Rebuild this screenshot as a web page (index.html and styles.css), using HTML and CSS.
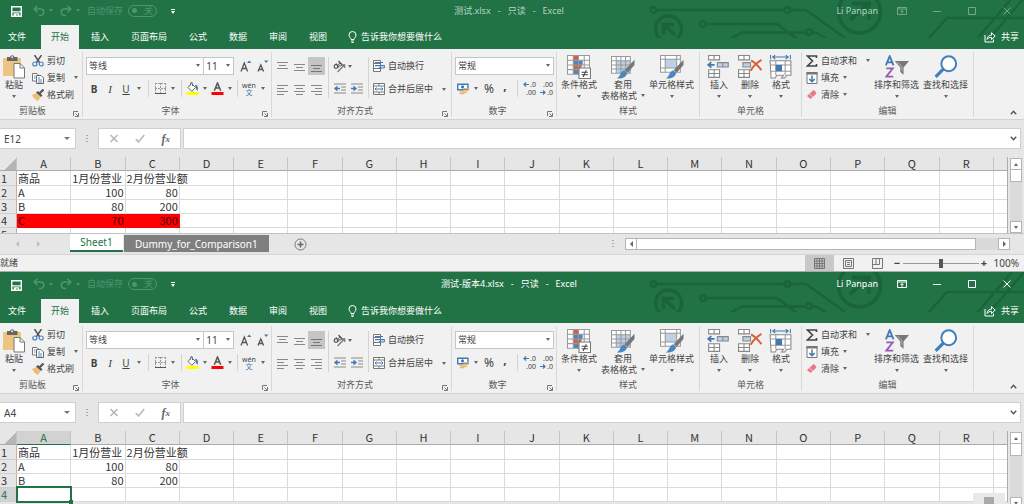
FILE: index.html
```html
<!DOCTYPE html>
<html lang="zh-CN">
<head>
<meta charset="utf-8">
<title>Excel</title>
<link rel="stylesheet" href="styles.css">
</head>
<body>
<svg class="defs" aria-hidden="true">
  <symbol id="save" viewBox="0 0 12 12"><path d="M.8.8h10.4v10.4H.8z" fill="none" stroke="currentColor" stroke-width="1.5"/><path d="M1 5.6h10v1.6H1zM3 8h6v3.5H7.4V9.4H5.600v2.100H3z" fill="currentColor"/></symbol>
  <symbol id="undo" viewBox="0 0 12 12"><path d="M1.200 4h6.300a3.200 3.200 0 0 1 0 6.500H6M4.500.8L1.200 4l3.300 3.200" fill="none" stroke="currentColor" stroke-width="1.600"/></symbol>
  <symbol id="redo" viewBox="0 0 12 12"><path d="M10.800 4H4.500a3.200 3.200 0 0 0 0 6.500H6M7.500.8L10.800 4 7.500 7.200" fill="none" stroke="currentColor" stroke-width="1.600"/></symbol>
  <symbol id="bulb" viewBox="0 0 9 12"><path d="M3 8.500C3 7 1 6.200 1 4a3.300 3.300 0 0 1 7 0C8 6.200 6 7 6 8.500zM3 10h3M3.500 11.500h2" fill="none" stroke="currentColor"/></symbol>
  <symbol id="share" viewBox="0 0 12 11"><path d="M1 3.500v7h8.500V8M3 8c.3-3 2-4.300 4.500-4.300V1.200L11.200 4.600 7.500 8V5.800C5.500 5.800 4 6.500 3 8z" fill="none" stroke="currentColor"/></symbol>
  <symbol id="ribbon-options" viewBox="0 0 10 8"><path d="M.5.5h9v7h-9zM.5 2h9M5 6.800V3.600M3.500 5L5 3.500 6.500 5" fill="none" stroke="currentColor"/></symbol>
  <symbol id="min" viewBox="0 0 8 8"><path d="M0 4.500h8" stroke="currentColor"/></symbol>
  <symbol id="max" viewBox="0 0 8 8"><path d="M.5.5h7v7h-7z" fill="none" stroke="currentColor"/></symbol>
  <symbol id="close" viewBox="0 0 8 8"><path d="M.5.5l7 7M7.500.5l-7 7" stroke="currentColor"/></symbol>
  <symbol id="paste" viewBox="0 0 22 24"><path d="M0 3h18v18H0z" fill="#edc581"/><path d="M4 2h3a2.300 2.300 0 0 1 4.500 0h3v4H4z" fill="#666"/><circle cx="9.200" cy="2.200" r="1" fill="#f1f1f1"/><path d="M11 8.500h6l4.500 4.500v10H11z" fill="#fff" stroke="#777"/><path d="M17 8.500V13h4.500" fill="none" stroke="#777"/></symbol>
  <symbol id="cut" viewBox="0 0 12 12"><path d="M2.500 0l5.300 8M9.500 0L4.200 8" stroke="#555" stroke-width="1.500"/><circle cx="2.800" cy="9" r="2" fill="none" stroke="#4a86bf" stroke-width="1.200"/><circle cx="9.200" cy="9" r="2" fill="none" stroke="#4a86bf" stroke-width="1.200"/></symbol>
  <symbol id="copy" viewBox="0 0 12 12"><path d="M.5 1.500h4.500l2 2V9H.500z" fill="#fff" stroke="#777"/><path d="M4.500 3.500h4.500l2.500 2.500v5.500h-7z" fill="#fff" stroke="#666"/><path d="M2 4h1.500M2 6h1.500M6 6h2M6 8h4M6 10h4" stroke="#4a86bf"/></symbol>
  <symbol id="brush" viewBox="0 0 12 12"><path d="M0 6l4.500-2 4 4L6 12C3.500 11 1.500 9 0 6z" fill="#edbd76"/><path d="M4 3.500l2-1.500 4.500 4.500L9 8z" fill="#555"/><path d="M7.500 4.500L11.500.5" stroke="#555" stroke-width="2.200"/></symbol>
  <symbol id="grow" viewBox="0 0 12 12"><path d="M1 11.500L4.300 3l3.300 8.500M2.200 8.500h4.200" fill="none" stroke="#555" stroke-width="1.300"/><path d="M7 3L9.200.5 11.400 3z" fill="#3f78b5"/></symbol>
  <symbol id="shrink" viewBox="0 0 12 12"><path d="M1 11.500L3.800 5l2.800 6.500M2 9.500h3.500" fill="none" stroke="#555" stroke-width="1.300"/><path d="M7 .5h4.400L9.200 3z" fill="#3f78b5"/></symbol>
  <symbol id="borders" viewBox="0 0 11 11"><path d="M.5 0v10M5.500 0v10M10.500 0v10M0 .5h11M0 5.500h11" stroke="#999" stroke-dasharray="2 1" fill="none"/><path d="M0 10.500h11" stroke="#555"/></symbol>
  <symbol id="fill" viewBox="0 0 12 13"><path d="M5 1.500l4 4-3.700 3.800-3.800-3.800zM4 3.500V1.500a1 1 0 0 1 2 0V4" fill="#fff" stroke="#666"/><path d="M8.500 2.800c3 .2 3.500 3 2.500 6-1.500-.5-1.500-3.200-2.500-6z" fill="#3d78b6"/><path d="M0 10h12v3H0z" fill="#ff0"/></symbol>
  <symbol id="font-color" viewBox="0 0 12 13"><path d="M2.800 8.800L6 1l3.200 7.800M4 6h4" fill="none" stroke="#555" stroke-width="1.500"/><path d="M0 10h12v3H0z" fill="red"/></symbol>
  <symbol id="top" viewBox="0 0 11 11"><path d="M0 1.500h11M2 4.500h7M0 7.500h11" stroke="#888"/></symbol>
  <symbol id="middle" viewBox="0 0 11 11"><path d="M0 3.500h11M2 6.500h7M0 9.500h11" stroke="#888"/></symbol>
  <symbol id="bottom" viewBox="0 0 11 11"><path d="M0 4.500h11M2 7.500h7M0 10.500h11" stroke="#777"/></symbol>
  <symbol id="left" viewBox="0 0 11 11"><path d="M0 1.500h11M0 4.500h7M0 7.500h11M0 10.500h7" stroke="#888"/></symbol>
  <symbol id="center" viewBox="0 0 11 11"><path d="M0 1.500h11M2 4.500h7M0 7.500h11M2 10.500h7" stroke="#888"/></symbol>
  <symbol id="right" viewBox="0 0 11 11"><path d="M0 1.500h11M4 4.500h7M0 7.500h11M4 10.500h7" stroke="#888"/></symbol>
  <symbol id="orient" viewBox="0 0 13 12"><circle cx="3" cy="6" r="1.800" fill="none" stroke="#555" stroke-width="1.200"/><path d="M3 3l3 4M5.500.5l4 4.500" stroke="#555" stroke-width="1.200"/><circle cx="7.200" cy="4" r="1.500" fill="none" stroke="#555"/><path d="M4.500 11.500L11.500 4.500M8.500 4.300h3.200v3.200" fill="none" stroke="#777" stroke-width="1.200"/></symbol>
  <symbol id="outdent" viewBox="0 0 12 11"><path d="M0 .5h12M7 3.500h5M7 6.500h5M0 9.500h12" stroke="#888"/><path d="M1 5h5" stroke="#3f78b5" stroke-width="1.500"/><path d="M0 5l3.500-3v6z" fill="#3f78b5"/></symbol>
  <symbol id="indent" viewBox="0 0 12 11"><path d="M0 .5h12M7 3.500h5M7 6.500h5M0 9.500h12" stroke="#888"/><path d="M0 5h5" stroke="#3f78b5" stroke-width="1.500"/><path d="M6 5L2.500 2v6z" fill="#3f78b5"/></symbol>
  <symbol id="wrap" viewBox="0 0 12 12"><path d="M.5.500h7v11h-7zM.5 3.500h7M.5 8.500h7" fill="#fff" stroke="#777"/><path d="M2 2.500h8M2 5.700h9c1.500 0 1 2.300-1 2.300H7" stroke="#3f78b5" fill="none" stroke-width="1.200"/><path d="M5.500 8L8 6v4z" fill="#3f78b5"/></symbol>
  <symbol id="merge" viewBox="0 0 12 12"><path d="M.5.5h11v11H.5zM.5 3h11M.5 9h11M6 .5V3M6 9v2.500" fill="#fff" stroke="#777"/><path d="M2 6h8M3.500 4.500L2 6l1.500 1.500M8.500 4.500L10 6 8.500 7.500" stroke="#3f78b5" fill="none"/></symbol>
  <symbol id="money" viewBox="0 0 13 12"><path d="M.8.8h11v6H.8z" fill="#fff" stroke="#3f78b5" stroke-width="1.500"/><circle cx="6" cy="3.700" r="1.700" fill="#3f78b5"/><path d="M7 5.500h5M7 7.500h5M6 9.500h5M3 9h3M3 11h5" stroke="#e9b568" stroke-width="1.400"/></symbol>
  <symbol id="arrow-l" viewBox="0 0 6 5"><path d="M6 2.500H1M3 .5l-2 2 2 2" fill="none" stroke="#3f78b5" stroke-width="1.200"/></symbol>
  <symbol id="arrow-r" viewBox="0 0 6 5"><path d="M0 2.500h5M3 .5l2 2-2 2" fill="none" stroke="#3f78b5" stroke-width="1.200"/></symbol>
  <symbol id="conditional" viewBox="0 0 23 23"><path d="M.5.5h21v18H.5z" fill="#fff"/><path d="M6 .5h5V5H6zM6 9.500h8V14H6z" fill="#d9603b"/><path d="M6 5h9v4.500H6zM6 14h6v4.500H6z" fill="#4a86bf"/><path d="M.5.5h21v18H.5zM6 .5v18M11 .5v18M16.500.5v18M.5 5h21M.5 9.500h21M.5 14h21" fill="none" stroke="#999"/><path d="M11.500 12.500h11v10h-11z" fill="#fff" stroke="#777"/><path d="M14 16.500h6M14 19h6M18.500 14.500l-3 6.500" stroke="#444"/></symbol>
  <symbol id="table-style" viewBox="0 0 23 23"><path d="M.5 1.500h18v16H.5z" fill="#fff"/><path d="M5 5.500h13.500v12H5z" fill="#bdd0e6"/><path d="M.5 1.500h18v16H.5zM5 1.500v16M9.500 1.500v16M14 1.500v16M.5 5.500h18M.5 9.500h18M.5 13.500h18" fill="none" stroke="#999"/><path d="M22.500 4.500v5L16 17l-3-2.500z" fill="#777"/><path d="M12.500 14.500l3 3c-1 4-5 5.500-10 5 3.500-1.500 3-6.500 7-8z" fill="#4a86bf"/></symbol>
  <symbol id="cell-style" viewBox="0 0 23 23"><path d="M.5.500h19v16H.5z" fill="#fff" stroke="#999"/><path d="M5 4h11v8.500H5z" fill="#bdd0e6"/><path d="M5 .5v16M16 .5v16M.5 4h19M.5 12.500h19" fill="none" stroke="#999"/><path d="M22.500 4.500v5L16 17l-3-2.500z" fill="#777"/><path d="M12.500 14.500l3 3c-1 4-5 5.500-10 5 3.500-1.500 3-6.500 7-8z" fill="#4a86bf"/></symbol>
  <symbol id="insert" viewBox="0 0 22 22"><path d="M1.500.5h10v4h-10zM6.500.5v4M1.500 13.500h10v7h-10zM6.500 13.500v7M1.500 17h10" fill="#fff" stroke="#888"/><path d="M9.500 7h10v4h-10zM14.500 7v4" fill="#bdd0e6" stroke="#888"/><path d="M1 9h6M4 6.500L1 9l3 2.500" fill="none" stroke="#3f78b5" stroke-width="1.500"/></symbol>
  <symbol id="delete" viewBox="0 0 22 22"><path d="M.5.5h10v4H.5zM5.500.5v4M.5 13.500h10v7H.5zM5.500 13.500v7M.5 17h10" fill="#fff" stroke="#888"/><path d="M4.500 7h7v4h-7z" fill="#bdd0e6" stroke="#888"/><path d="M12 5c3.500 2 6.500 5 9.500 9M21.500 4.500C17.500 7 14 10 11.500 14.500" fill="none" stroke="#d9603b" stroke-width="1.800"/></symbol>
  <symbol id="format" viewBox="0 0 22 23"><path d="M1 0v4M20 0v4M3 2h15M5.500.2L3 2l2.500 1.800M15.500.2L18 2l-2.500 1.800" fill="none" stroke="#3f78b5"/><path d="M.5 5.500h20v14h-4l-2 2.500h-3l2-2.500H7L5.500 22h-4z" fill="#fff" stroke="#888"/><path d="M6 5.500v14M15 5.500v14M.5 9.500h20M.5 15.500h20" stroke="#999"/><path d="M6 9.500h6v6H6z" fill="#3f78b5"/></symbol>
  <symbol id="sigma" viewBox="0 0 12 12"><path d="M10.500 3V1H1.500l5 5-5 5h9V9" fill="none" stroke="#444" stroke-width="1.600"/></symbol>
  <symbol id="fill-down" viewBox="0 0 12 12"><path d="M1 .5h10v11H1z" fill="#fff" stroke="#777"/><path d="M.5 0h11v2.500H.5z" fill="#777"/><path d="M6 3.500v6M3.300 7L6 9.700 8.700 7" fill="none" stroke="#3f78b5" stroke-width="1.500"/></symbol>
  <symbol id="eraser" viewBox="0 0 12 12"><path d="M1 7l6-5.500a1 1 0 0 1 1.500 0l1.500 2a1 1 0 0 1 0 1.500L4.500 10z" fill="#e8798b"/><path d="M3.500 4.800l3.200 3.500" stroke="#f7c8cf"/></symbol>
  <symbol id="sort" viewBox="0 0 22 22"><path d="M.8 9.500L4.300 1l3.500 8.500M2 6.800h4.600" fill="none" stroke="#3f78b5" stroke-width="1.600"/><path d="M1.200 12.200h6l-6 7.600h6.300" fill="none" stroke="#9b59b6" stroke-width="1.600"/><path d="M9 5.500h13l-5 6v6.500l-3-2.500v-4z" fill="#777"/><path d="M11.500 6.500l4 4.500v4" fill="none" stroke="#aaa"/></symbol>
  <symbol id="find" viewBox="0 0 22 22"><circle cx="13.500" cy="8" r="6.800" fill="#fff" stroke="#3f7fbd" stroke-width="1.800"/><path d="M8.500 13L1.500 20" stroke="#3f7fbd" stroke-width="3"/></symbol>
  <symbol id="launcher" viewBox="0 0 6 6"><path d="M.5 5V.5H5M2.500 2.500L5 5M5.500 2v3.500H2" fill="none" stroke="#777"/></symbol>
  <symbol id="collapse" viewBox="0 0 7 5"><path d="M.8 4.200l2.700-3 2.700 3" fill="none" stroke="#555" stroke-width="1.400"/></symbol>
  <symbol id="expand" viewBox="0 0 7 5"><path d="M.8.8l2.700 3 2.700-3" fill="none" stroke="#555" stroke-width="1.400"/></symbol>
  <symbol id="cancel" viewBox="0 0 10 9"><path d="M1.500 1l7 7M8.500 1l-7 7" stroke="#b5b5b5" stroke-width="1.500"/></symbol>
  <symbol id="check" viewBox="0 0 10 9"><path d="M.8 5l2.700 3L9.200 1" fill="none" stroke="#b5b5b5" stroke-width="1.500"/></symbol>
  <symbol id="plus" viewBox="0 0 13 13"><circle cx="6.500" cy="6.500" r="5.500" fill="none" stroke="#777"/><path d="M6.500 3.500v6M3.500 6.500h6" stroke="#666" stroke-width="1.500"/></symbol>
  <symbol id="normal-view" viewBox="0 0 11 11"><path d="M.5.500h10v10H.5zM3 .5v10M5.500.5v10M8 .5v10M.5 3h10M.5 5.500h10M.5 8h10" fill="none" stroke="#777"/></symbol>
  <symbol id="layout-view" viewBox="0 0 11 11"><path d="M.5.500h10v10H.5zM2.500 2.500h6v6h-6zM4 4.500h3M4 6.500h3" fill="none" stroke="#777"/></symbol>
  <symbol id="break-view" viewBox="0 0 11 11"><path d="M.5.500h10v10H.5zM.5 6.500h7v-6M4 .5v6" fill="none" stroke="#777"/></symbol>
  <symbol id="circuit" viewBox="640 -3 384 41">
    <g fill="none" stroke="#1b6339" stroke-width="2.400">
      <circle cx="653.500" cy="10" r="2.800"/><path d="M656.500 10h128M790.500 10H806l39 28"/><circle cx="787.500" cy="10" r="2.800"/>
      <circle cx="703" cy="24" r="2.800"/><path d="M706 24h71l20 15M730 39l12-6.500h64M812 32.500h4l10 6"/><circle cx="809" cy="32" r="2.800"/>
      <path d="M928 39l19-21h77M977 39l35-41M989 39l35-41"/>
      <circle cx="668.500" cy="29" r="13" stroke-width="3.400"/><path d="M675 35l-11-10M663.500 35V24.500H674" stroke-width="3.600"/>
      <circle cx="859.500" cy="12" r="21" stroke-width="3.600"/><path d="M850 20l18-16M852 3.500h17V20" stroke-width="4"/>
    </g>
  </symbol>
</svg>

<main id="desktop" class="desktop"></main>

<template id="workbook">
  <section class="window">
    <header class="header">
      <svg class="circuit" aria-hidden="true"><use href="#circuit"/></svg>
      <div class="titlebar">
        <div class="quick">
          <button class="save" aria-label="保存"><svg class="i11"><use href="#save"/></svg></button>
          <button class="faded history" aria-label="撤消"><svg class="i12"><use href="#undo"/></svg><i class="caret"></i></button>
          <button class="faded history" aria-label="恢复"><svg class="i12"><use href="#redo"/></svg><i class="caret"></i></button>
          <span class="faded">自动保存</span>
          <button class="faded toggle" role="switch" aria-checked="false" aria-label="自动保存"><i class="knob"></i>关</button>
          <button class="customize" aria-label="自定义快速访问工具栏"><i class="caret"></i></button>
        </div>
        <h1 class="title"></h1>
        <div class="account">
          <span class="user">Li Panpan</span>
          <button aria-label="功能区显示选项"><svg class="options-icon"><use href="#ribbon-options"/></svg></button>
          <button aria-label="最小化"><svg class="i8"><use href="#min"/></svg></button>
          <button aria-label="最大化"><svg class="i8"><use href="#max"/></svg></button>
          <button aria-label="关闭"><svg class="i8"><use href="#close"/></svg></button>
        </div>
      </div>
      <nav class="tabs">
        <button class="tab file">文件</button>
        <button class="tab active">开始</button>
        <button class="tab">插入</button>
        <button class="tab">页面布局</button>
        <button class="tab">公式</button>
        <button class="tab">数据</button>
        <button class="tab">审阅</button>
        <button class="tab">视图</button>
        <button class="tell"><svg class="bulb"><use href="#bulb"/></svg>告诉我你想要做什么</button>
        <button class="share"><svg class="i12"><use href="#share"/></svg>共享</button>
      </nav>
    </header>

    <div class="ribbon">
      <section class="group clipboard">
        <div class="tools">
          <button class="big paste"><svg class="i24"><use href="#paste"/></svg><span>粘贴</span><i class="caret"></i></button>
          <div class="stack">
            <button class="small"><svg class="i12"><use href="#cut"/></svg>剪切</button>
            <button class="small"><svg class="i12"><use href="#copy"/></svg>复制<i class="caret far"></i></button>
            <button class="small"><svg class="i12"><use href="#brush"/></svg>格式刷</button>
          </div>
        </div>
        <footer>剪贴板</footer><button class="launch" aria-label="剪贴板设置"><svg class="i6"><use href="#launcher"/></svg></button>
      </section>

      <section class="group font">
        <div class="tools rows">
          <div class="row">
            <label class="combo font-name"><select aria-label="字体"><option>等线</option></select></label>
            <label class="combo font-size"><select aria-label="字号"><option>11</option></select></label>
            <button class="tool sized" aria-label="增大字号"><svg class="i12"><use href="#grow"/></svg></button>
            <button class="tool sized" aria-label="减小字号"><svg class="i12"><use href="#shrink"/></svg></button>
          </div>
          <div class="row">
            <button class="tool letter"><b>B</b></button>
            <button class="tool letter serif"><em>I</em></button>
            <button class="tool letter split"><u>U</u><i class="caret"></i></button>
            <hr>
            <button class="tool split" aria-label="边框"><svg class="i11"><use href="#borders"/></svg><i class="caret"></i></button>
            <hr>
            <button class="tool split tight" aria-label="填充颜色"><svg class="i13"><use href="#fill"/></svg><i class="caret"></i></button>
            <button class="tool split tight" aria-label="字体颜色"><svg class="i13"><use href="#font-color"/></svg><i class="caret"></i></button>
            <hr>
            <button class="tool split"><span class="pinyin"><span>wén</span><span>文</span></span><i class="caret"></i></button>
          </div>
        </div>
        <footer>字体</footer><button class="launch" aria-label="字体设置"><svg class="i6"><use href="#launcher"/></svg></button>
      </section>

      <section class="group align">
        <div class="tools align-tools">
          <div class="cluster">
            <button class="tool" aria-label="顶端对齐"><svg class="i11"><use href="#top"/></svg></button>
            <button class="tool" aria-label="垂直居中"><svg class="i11"><use href="#middle"/></svg></button>
            <button class="tool pressed" aria-label="底端对齐"><svg class="i11"><use href="#bottom"/></svg></button>
            <button class="tool" aria-label="左对齐"><svg class="i11"><use href="#left"/></svg></button>
            <button class="tool" aria-label="居中"><svg class="i11"><use href="#center"/></svg></button>
            <button class="tool" aria-label="右对齐"><svg class="i11"><use href="#right"/></svg></button>
          </div>
          <div class="cluster two">
            <button class="tool" aria-label="方向"><svg class="i13"><use href="#orient"/></svg></button>
            <i class="caret"></i>
            <button class="tool" aria-label="减少缩进量"><svg class="i12"><use href="#outdent"/></svg></button>
            <button class="tool" aria-label="增加缩进量"><svg class="i12"><use href="#indent"/></svg></button>
          </div>
          <div class="cluster one">
            <button class="small"><svg class="i12"><use href="#wrap"/></svg>自动换行</button>
            <button class="small"><svg class="i12"><use href="#merge"/></svg>合并后居中<i class="caret far"></i></button>
          </div>
        </div>
        <footer>对齐方式</footer><button class="launch" aria-label="对齐设置"><svg class="i6"><use href="#launcher"/></svg></button>
      </section>

      <section class="group number">
        <div class="tools rows">
          <div class="row"><label class="combo wide"><select aria-label="数字格式"><option>常规</option></select></label></div>
          <div class="row">
            <button class="tool split" aria-label="会计数字格式"><svg class="i12"><use href="#money"/></svg><i class="caret"></i></button>
            <button class="tool sign">%</button>
            <button class="tool sign comma">,</button>
            <hr>
            <button class="tool decimals"><span><svg class="arrow"><use href="#arrow-l"/></svg>.0</span><span>.00</span></button>
            <button class="tool decimals"><span>.00</span><span><svg class="arrow"><use href="#arrow-r"/></svg>.0</span></button>
          </div>
        </div>
        <footer>数字</footer><button class="launch" aria-label="数字设置"><svg class="i6"><use href="#launcher"/></svg></button>
      </section>

      <section class="group styles">
        <div class="tools">
          <button class="big"><svg class="i24"><use href="#conditional"/></svg><span>条件格式</span><i class="caret"></i></button>
          <button class="big"><svg class="i24"><use href="#table-style"/></svg><span>套用</span><span>表格格式<i class="caret inline"></i></span></button>
          <button class="big"><svg class="i24"><use href="#cell-style"/></svg><span>单元格样式</span><i class="caret"></i></button>
        </div>
        <footer>样式</footer>
      </section>

      <section class="group cells">
        <div class="tools">
          <button class="big"><svg class="i24"><use href="#insert"/></svg><span>插入</span><i class="caret"></i></button>
          <button class="big"><svg class="i24"><use href="#delete"/></svg><span>删除</span><i class="caret"></i></button>
          <button class="big"><svg class="i24"><use href="#format"/></svg><span>格式</span><i class="caret"></i></button>
        </div>
        <footer>单元格</footer>
      </section>

      <section class="group editing">
        <div class="tools">
          <div class="stack">
            <button class="small"><svg class="i12"><use href="#sigma"/></svg>自动求和<i class="caret far"></i></button>
            <button class="small"><svg class="i12"><use href="#fill-down"/></svg>填充<i class="caret"></i></button>
            <button class="small"><svg class="i12"><use href="#eraser"/></svg>清除<i class="caret"></i></button>
          </div>
          <button class="big"><svg class="i24"><use href="#sort"/></svg><span>排序和筛选</span><i class="caret"></i></button>
          <button class="big"><svg class="i24"><use href="#find"/></svg><span>查找和选择</span><i class="caret"></i></button>
        </div>
        <footer>编辑</footer>
      </section>
      <button class="collapse" aria-label="折叠功能区"><svg class="chevron"><use href="#collapse"/></svg></button>
    </div>

    <div class="formula-bar">
      <label class="name-box"><input class="cell-name" aria-label="名称框"><i class="caret"></i></label>
      <span class="dots"></span>
      <div class="formula-actions">
        <button aria-label="取消"><svg class="i9"><use href="#cancel"/></svg></button>
        <button aria-label="输入"><svg class="i9"><use href="#check"/></svg></button>
        <button class="fx">f<small>x</small></button>
      </div>
      <label class="formula"><input aria-label="编辑栏"><svg class="chevron"><use href="#expand"/></svg></label>
    </div>

    <div class="sheet-area">
      <table class="sheet"></table>
      <div class="vscroll">
        <button aria-label="向上滚动"><i class="caret up"></i></button>
        <div class="thumb"></div>
        <div class="track"></div>
        <button aria-label="向下滚动"><i class="caret"></i></button>
      </div>
    </div>
  </section>
</template>

<template id="window-footer">
  <div class="sheet-tabs">
    <button class="step" aria-label="上一张"><i class="caret prev"></i></button>
    <button class="step" aria-label="下一张"><i class="caret next"></i></button>
    <button class="sheet-tab current">Sheet1</button>
    <button class="sheet-tab dummy">Dummy_for_Comparison1</button>
    <button class="add" aria-label="新工作表"><svg class="i13"><use href="#plus"/></svg></button>
    <span class="dots"></span>
    <div class="hscroll">
      <button aria-label="向左滚动"><i class="caret prev"></i></button>
      <div class="thumb"></div>
      <div class="track"></div>
      <button aria-label="向右滚动"><i class="caret next"></i></button>
    </div>
  </div>
  <footer class="status">
    <span class="ready">就绪</span>
    <button class="view on" aria-label="普通"><svg class="i11"><use href="#normal-view"/></svg></button>
    <button class="view" aria-label="页面布局"><svg class="i11"><use href="#layout-view"/></svg></button>
    <button class="view" aria-label="分页预览"><svg class="i11"><use href="#break-view"/></svg></button>
    <button class="zoom-step" aria-label="缩小">−</button>
    <input class="zoom" type="range" min="0" max="100" value="50" aria-label="缩放">
    <button class="zoom-step" aria-label="放大">+</button>
    <span class="percent">100%</span>
  </footer>
</template>
<script src="app.js"></script>
</body>
</html>
```
FILE: styles.css
```css
* { box-sizing: border-box; }
body {
  margin: 0;
  background: #e6e6e6;
  color: #444;
  font: 9px/12px "Noto Sans", "Noto Sans CJK SC", sans-serif;
}
button, input, select { font: inherit; color: inherit; border: 0; padding: 0; margin: 0; background: none; outline: 0; border-radius: 0; }
button { display: flex; align-items: center; justify-content: center; white-space: nowrap; flex: none; }
svg { display: block; flex: none; }
.defs { position: absolute; width: 0; height: 0; }
.desktop { position: relative; display: flex; flex-direction: column; height: 100vh; overflow: hidden; }
.window { flex: none; }
.compare { flex: 1; min-height: 0; display: flex; flex-direction: column; }

.i6 { width: 6px; height: 6px; }
.i8 { width: 8px; height: 8px; }
.i9 { width: 10px; height: 9px; }
.i11 { width: 11px; height: 11px; }
.i12 { width: 12px; height: 12px; }
.i13 { width: 13px; height: 13px; }
.i24 { width: 24px; height: 24px; }
.chevron { width: 7px; height: 5px; }
.caret { display: block; flex: none; width: 0; height: 0; border: 2px solid transparent; border-top: 3px solid currentColor; border-bottom: 0; }
.caret.up { border-top: 0; border-bottom: 3px solid currentColor; }
.caret.prev { border: 3px solid transparent; border-left: 0; border-right: 3px solid currentColor; }
.caret.next { border: 3px solid transparent; border-right: 0; border-left: 3px solid currentColor; }

/* Title bar and ribbon tabs */
.header { position: relative; overflow: hidden; flex: none; background: #217346; color: #fff; }
.circuit { position: absolute; right: 0; bottom: 11px; width: 384px; height: 41px; }
.titlebar { position: relative; display: grid; grid-template-columns: 1fr auto 1fr; align-items: center; height: 25px; padding: 0 6px 4px 0; }
.compare .titlebar { height: 27px; padding-bottom: 3px; }
.title { margin: 0; font: inherit; white-space: pre; }
.quick { display: flex; align-items: center; padding-left: 11px; }
.faded { color: #4f9370; }
.save { margin-right: 11px; padding-top: 2px; }
.history { gap: 4px; width: 27px; justify-content: flex-start; }
.toggle { width: 29px; height: 12px; margin-left: 5px; padding: 0 3px; border: 1px solid #4f9370; border-radius: 6px; justify-content: space-between; }
.knob { width: 5px; height: 5px; border-radius: 3px; background: #4f9370; }
.customize { margin-left: 14px; padding-top: 3px; }
.customize .caret { position: relative; }
.customize .caret::before { content: ""; position: absolute; left: -2px; top: -5px; width: 4px; height: 1px; background: #fff; }
.account { display: flex; align-items: center; justify-content: flex-end; gap: 13px; }
.account button { width: 22px; height: 16px; }
.options-icon { width: 10px; height: 8px; }
.inactive .title, .inactive .user { color: #b5d2c1; }
.inactive .account button { color: #72a78a; }
.tabs { position: relative; display: flex; gap: 2px; height: 24px; }
.tab { height: 24px; padding: 0 10px; }
.tab.file { width: 39px; padding: 0 0 0 8px; justify-content: flex-start; }
.tab.active { background: #f1f1f1; color: #217346; }
.tell { margin-left: 9px; gap: 4px; }
.bulb { width: 9px; height: 12px; }
.share { margin-left: auto; padding-right: 5px; gap: 5px; }

/* Ribbon */
.ribbon { display: flex; flex: none; height: 71px; padding: 3px 0 2px; background: #f1f1f1; border-bottom: 1px solid #d2d2d2; }
.ribbon .caret { color: #666; }
.group { position: relative; display: flex; flex-direction: column; flex: none; border-right: 1px solid #d8d8d8; }
.group footer { text-align: center; line-height: 13px; color: #5a5a5a; }
.launch { position: absolute; right: 3px; bottom: 0; }
.tools { display: flex; flex: 1; }
.clipboard { width: 83px; }
.clipboard footer { padding-right: 17px; }
.font { width: 189px; }
.align { width: 180px; }
.number { width: 105px; }
.font footer, .align footer, .number footer { padding-right: 13px; }
.styles { width: 143px; }
.cells { width: 102px; }
.editing { width: 172px; }
.big { flex-direction: column; justify-content: flex-start; padding-top: 3px; }
.big span { line-height: 11px; }
.big .caret { margin-top: 5px; }
.big .caret.inline { display: inline-block; margin: 0 0 2px 4px; }
.paste { width: 28px; }
.stack { display: flex; flex-direction: column; padding-left: 4px; }
.small { height: 17px; gap: 3px; justify-content: flex-start; }
.small .caret { margin-left: 1px; }
.small .caret.far { margin-left: 6px; }

.rows { flex-direction: column; padding-top: 2px; }
.row { display: flex; align-items: center; height: 23px; padding-left: 3px; }
.combo { position: relative; display: flex; }
.combo::after { content: ""; position: absolute; right: 4px; top: 7px; border: 2px solid transparent; border-top: 3px solid #666; border-bottom: 0; pointer-events: none; }
.combo select { appearance: none; width: 100%; height: 18px; border: 1px solid #c6c6c6; background: #fff; padding: 0 2px; }
.font-name { width: 119px; }
.font-size { width: 31px; margin-left: -1px; }
.font-size select { font-size: 10px; }
.combo.wide { width: 99px; }
.tool { height: 18px; }
.sized { width: 17px; margin-left: 3px; }
.sized + .sized { margin-left: 0; }
.letter { width: 16px; font-size: 10px; }
.serif { font: 11px/12px "Liberation Serif", serif; }
.split { gap: 5px; width: 27px; }
.tight { gap: 4px; width: 25px; }
.font .letter.split { width: 27px; gap: 7px; }
.row hr { width: 1px; height: 17px; border: 0; margin: 0 2px 0 3px; background: #d4d4d4; }
.pinyin { display: flex; flex-direction: column; font-size: 7px; line-height: 7px; }
.pinyin span:last-child { color: #3f78b5; text-align: center; }
.align-tools { display: flex; padding-top: 5px; }
.cluster { display: grid; grid-template-columns: repeat(3, 17px); grid-auto-rows: 18px; row-gap: 5px; padding: 0 3px 0 2px; height: 41px; border-right: 1px solid #d4d4d4; align-items: center; }
.cluster.two { grid-template-columns: 17px 17px; padding: 0 3px 0 2px; }
.cluster.one { grid-template-columns: 1fr; border: 0; padding: 0 0 0 4px; }
.pressed { background: #c5c5c5; }
.sign { width: 18px; font-size: 12px; }
.comma { width: 14px; font-weight: bold; padding-bottom: 6px; }
.decimals { width: 17px; flex-direction: column; align-items: flex-end; font-size: 7px; line-height: 8px; padding-right: 3px; }
.decimals span { display: flex; align-items: center; gap: 1px; }
.arrow { width: 6px; height: 5px; }
.number .split { width: 25px; }
.number .row hr { margin: 0 4px 0 5px; }
.styles .tools { gap: 4px; padding-left: 4px; }
.cells .tools { justify-content: space-between; padding: 0 8px 0 7px; }
.editing .stack { width: 68px; padding-left: 4px; }
.editing .tools { gap: 4px; }
.collapse { margin-left: auto; align-self: flex-end; padding: 0 7px 2px 0; }

/* Formula bar */
.formula-bar { display: flex; flex: none; align-items: center; height: 37px; padding: 0 3px 0 0; background: #e6e6e6; }
.name-box, .formula, .formula-actions { display: flex; align-items: center; height: 21px; background: #fff; border: 1px solid #cfcfcf; }
.name-box { width: 76px; border-left: 0; padding-right: 5px; }
.name-box input { width: 60px; flex: 1; padding-left: 4px; font-size: 10px; }
.name-box .caret { color: #777; border-width: 3px 3px 0; }
.dots { width: 2px; height: 8px; background: repeating-linear-gradient(#aaa 0 1px, transparent 1px 3px); }
.formula-bar .dots { margin: 0 10px; }
.formula-actions { width: 83px; justify-content: space-around; padding: 0 2px; }
.fx { font: italic bold 12px/12px "Liberation Serif", serif; color: #666; }
.fx small { font-size: 9px; }
.formula { flex: 1; margin-left: 2px; padding-right: 3px; }
.formula input { flex: 1; min-width: 0; }

/* Cells */
.sheet-area { display: flex; overflow: hidden; height: 77px; border-bottom: 1px solid #c3c3c3; background: #e6e6e6; }
.compare .sheet-area { flex: 1; height: auto; border: 0; }
.sheet { flex: 1; width: 0; table-layout: fixed; border-collapse: separate; border-spacing: 0; font: 11px/13px "Noto Sans CJK SC", sans-serif; color: #333; background: #fff; align-self: flex-start; border-right: 1px solid #ababab; }
.sheet th, .sheet td { height: 14px; padding: 0 1px; border: solid #dadada; border-width: 0 1px 1px 0; white-space: nowrap; line-height: 13px; }
.sheet tbody tr:first-child > * { height: 15px; padding-top: 1px; }
.sheet th { background: #e6e6e6; font-weight: normal; border-color: #b5b5b5; text-align: center; }
.sheet tbody th { text-align: left; border-bottom-color: #cfcfcf; }
.sheet thead th { border-bottom-color: #ababab; border-right-color: #c4c4c4; }
.sheet thead th:last-child, .sheet tbody td:last-child { border-right: 0; }
.sheet .corner { width: 17px; background: linear-gradient(135deg, #e6e6e6 62%, #b5b5b5 62%); }
.sheet .edge { width: 13px; }
.sheet .num { text-align: right; }
.sheet .marked { background: red; border-color: red; color: #400; }
.sheet thead .picked, .sheet tbody .picked { background: #d2d2d2; color: #217346; }
.sheet thead .picked { border-bottom-color: #217346; }
.sheet .cursor { position: relative; }
.sheet .cursor::before { content: ""; position: absolute; inset: -2px -2px -2px -1px; border: 2px solid #217346; }
.sheet .cursor::after { content: ""; position: absolute; right: -3px; bottom: -3px; width: 4px; height: 4px; background: #217346; }

.vscroll { display: flex; flex-direction: column; width: 12px; margin: 1px 2px 0 2px; background: #dadada; }
.compare .vscroll { flex: none; height: 77px; }
.vscroll button, .hscroll button { width: 12px; height: 12px; background: #fff; border: 1px solid #b5b5b5; color: #666; }
.vscroll .thumb { height: 13px; background: #fff; border: 1px solid #b5b5b5; margin-top: -1px; }
.vscroll .track { flex: 1; }

/* Sheet tabs and status bar */
.sheet-tabs { display: flex; align-items: center; height: 21px; background: #e6e6e6; border-bottom: 1px solid #d5d5d5; padding-right: 14px; }
.step { width: 21px; color: #bbb; }
.step:first-child { margin-left: 7px; }
.sheet-tab { font-size: 10px; height: 17px; align-self: flex-start; }
.current { width: 53px; height: 18px; margin-left: 21px; background: #fff; color: #217346; border-bottom: 2px solid #217346; }
.dummy { margin: 1px 0 0 1px; padding: 0 11px; background: #7f7f7f; color: #fff; }
.add { margin: 0 auto 0 25px; }
.sheet-tabs .dots { margin-right: 11px; }
.hscroll { display: flex; width: 385px; background: #dadada; }
.hscroll .thumb { flex: 1; background: #fff; border: 1px solid #b5b5b5; margin-left: -1px; }
.hscroll .track { width: 22px; }
.status { display: flex; align-items: center; height: 17px; background: #f1f1f1; border-bottom: 1px solid #aaa; padding-right: 5px; }
.ready { flex: 1; }
.view { width: 29px; height: 16px; }
.view.on { background: #c8c8c8; }
.zoom-step { width: 11px; font: bold 11px/12px "Noto Sans", sans-serif; }
.zoom { appearance: none; width: 76px; height: 10px; background: linear-gradient(#999, #999) center / 100% 1px no-repeat; }
.zoom::-webkit-slider-thumb { appearance: none; width: 4px; height: 9px; background: #555; }
.percent { margin-left: 4px; font-size: 10px; }

.overlay { position: absolute; right: 19px; bottom: 0; width: 32px; height: 11px; background: #e9e9e9; }
.overlay::before { content: ""; position: absolute; left: 11px; bottom: 0; width: 10px; height: 7px; background: #a9a9a9; }
```
FILE: app.js
```js
const COLUMNS = [..."ABCDEFGHIJKLMNOPQR"];

const workbooks = [
  {
    title: ["测试.xlsx", "只读", "Excel"],
    className: "inactive",
    cell: "E12",
    rows: [["商品", "1月份营业", "2月份营业额"], ["A", 100, 80], ["B", 80, 200], ["C", 70, 300], []],
    marked: 4,
    footer: true
  },
  {
    title: ["测试-版本4.xlsx", "只读", "Excel"],
    className: "compare",
    cell: "A4",
    rows: [["商品", "1月份营业", "2月份营业额"], ["A", 100, 80], ["B", 80, 200], []],
    cursor: 4
  }
];

function headRow(book) {
  const letters = COLUMNS.map((c) => `<th scope="col" class="${book.cursor && c === "A" ? "picked" : ""}">${c}</th>`);
  return `<thead><tr><th class="corner"></th>${letters.join("")}<th class="edge"></th></tr></thead>`;
}

function bodyRow(book, values, number) {
  let html = `<th scope="row" class="${book.cursor === number ? "picked" : ""}">${number}</th>`;
  for (let i = 0; i <= COLUMNS.length; i++) {
    const value = values[i] ?? "";
    const classes = [];
    if (typeof value === "number") classes.push("num");
    if (book.marked === number && i < 3) classes.push("marked");
    if (book.cursor === number && i === 0) classes.push("cursor");
    const spill = number === 1 && i === 2;
    html += `<td class="${classes.join(" ")}"${spill ? ' colspan="2"' : ""}>${value}</td>`;
    if (spill) i++;
  }
  return `<tr>${html}</tr>`;
}

const desktop = document.getElementById("desktop");
const template = document.getElementById("workbook");
const windowFooter = document.getElementById("window-footer");

for (const book of workbooks) {
  const view = template.content.cloneNode(true);
  const win = view.querySelector(".window");
  win.classList.add(book.className);
  view.querySelector(".title").textContent = book.title.join("   -   ");
  view.querySelector(".cell-name").value = book.cell;
  view.querySelector(".sheet").innerHTML =
    headRow(book) + `<tbody>${book.rows.map((row, i) => bodyRow(book, row, i + 1)).join("")}</tbody>`;
  if (book.footer) win.append(windowFooter.content.cloneNode(true));
  desktop.append(view);
}

const overlay = document.createElement("div");
overlay.className = "overlay";
desktop.append(overlay);
```
